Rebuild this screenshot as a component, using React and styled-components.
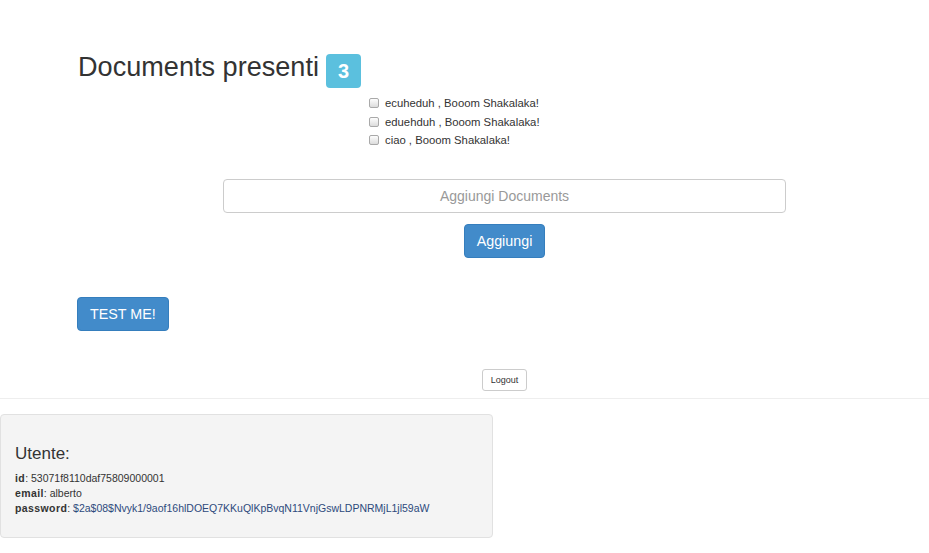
import styled, { createGlobalStyle } from "styled-components"

const GlobalStyle = createGlobalStyle`
  body {
    margin: 0;
    background: #fff;
    font-family: "Liberation Sans", Arial, sans-serif;
    color: #333;
  }
`

const documents = [
  { name: "ecuheduh", text: "Booom Shakalaka!" },
  { name: "eduehduh", text: "Booom Shakalaka!" },
  { name: "ciao", text: "Booom Shakalaka!" },
]

const App = () => {
  return (
    <Page>
      <GlobalStyle />
      <Header>
        <Title>Documents presenti</Title>
        <Badge>{documents.length}</Badge>
      </Header>

      <DocList>
        {documents.map((doc) => (
          <DocRow key={doc.name}>
            <Check />
            <span>{doc.name} , {doc.text}</span>
          </DocRow>
        ))}
      </DocList>

      <AddForm>
        <TextInput placeholder="Aggiungi Documents" />
        <Button>Aggiungi</Button>
      </AddForm>

      <TestRow>
        <Button>TEST ME!</Button>
      </TestRow>

      <LogoutRow>
        <Logout>Logout</Logout>
      </LogoutRow>

      <Divider />

      <Well>
        <WellTitle>Utente:</WellTitle>
        <Info><b>id</b>: 53071f8110daf75809000001</Info>
        <Info><b>email</b>: alberto</Info>
        <Info>
          <b>password</b>: <Hash>$2a$08$Nvyk1/9aof16hlDOEQ7KKuQlKpBvqN11VnjGswLDPNRMjL1jl59aW</Hash>
        </Info>
      </Well>
    </Page>
  )
}
export default App

const Page = styled.div`
  padding-top: 52px;
  width: 929px;
`

const Header = styled.div`
  display: flex;
  align-items: flex-start;
  gap: 7px;
  padding-left: 78px;
`

const Title = styled.h1`
  margin: 0;
  font-size: 27.1px;
  line-height: 30px;
  font-weight: 400;
  color: #333;
`

const Badge = styled.span`
  margin-top: 2px;
  width: 35px;
  height: 34px;
  display: flex;
  align-items: center;
  justify-content: center;
  background: #5bc0de;
  color: #fff;
  border-radius: 4px;
  font-size: 20px;
  font-weight: 700;
`

const DocList = styled.div`
  display: flex;
  flex-direction: column;
  margin-top: 6px;
  padding-left: 369px;
`

const DocRow = styled.div`
  display: flex;
  align-items: center;
  gap: 6px;
  height: 18.5px;
  font-size: 11.3px;
  color: #333;
`

const Check = styled.span`
  width: 8px;
  height: 8px;
  border: 1px solid #a9a9a9;
  border-radius: 2px;
  background: linear-gradient(#fdfdfd, #dcdcdc);
`

const AddForm = styled.div`
  display: flex;
  flex-direction: column;
  align-items: center;
  gap: 11px;
  margin: 29px 0 0 223px;
  width: 563px;
`

const TextInput = styled.input`
  box-sizing: border-box;
  width: 100%;
  height: 34px;
  border: 1px solid #ccc;
  border-radius: 4px;
  text-align: center;
  font-family: "Liberation Sans", Arial, sans-serif;
  font-size: 14px;
  color: #555;
  outline: none;
  &::placeholder {
    color: #999;
  }
`

const Button = styled.button`
  box-sizing: border-box;
  height: 34px;
  padding: 0 12px;
  background: #428bca;
  border: 1px solid #357ebd;
  border-radius: 4px;
  color: #fff;
  font-family: "Liberation Sans", Arial, sans-serif;
  font-size: 14.3px;
`

const TestRow = styled.div`
  display: flex;
  margin-top: 39px;
  padding-left: 77px;
`

const LogoutRow = styled.div`
  display: flex;
  justify-content: center;
  margin: 38px 0 0 223px;
  width: 563px;
`

const Logout = styled.button`
  box-sizing: border-box;
  width: 45px;
  height: 22px;
  padding: 0;
  background: #fff;
  border: 1px solid #ccc;
  border-radius: 3px;
  color: #333;
  font-family: "Liberation Sans", Arial, sans-serif;
  font-size: 9px;
`

const Divider = styled.hr`
  margin: 7px 0 0;
  border: 0;
  border-top: 1px solid #eee;
`

const Well = styled.div`
  box-sizing: border-box;
  margin-top: 15px;
  width: 493px;
  height: 124px;
  padding: 29px 14px 0;
  background: #f4f4f4;
  border: 1px solid #e1e1e1;
  border-radius: 4px;
`

const WellTitle = styled.h3`
  margin: 0 0 7px;
  font-size: 17px;
  line-height: 20px;
  font-weight: 400;
  color: #333;
`

const Info = styled.div`
  font-size: 10.5px;
  line-height: 15px;
  color: #333;
  b {
    font-weight: 700;
    letter-spacing: 0.4px;
  }
`

const Hash = styled.span`
  color: #2d4a7c;
`
